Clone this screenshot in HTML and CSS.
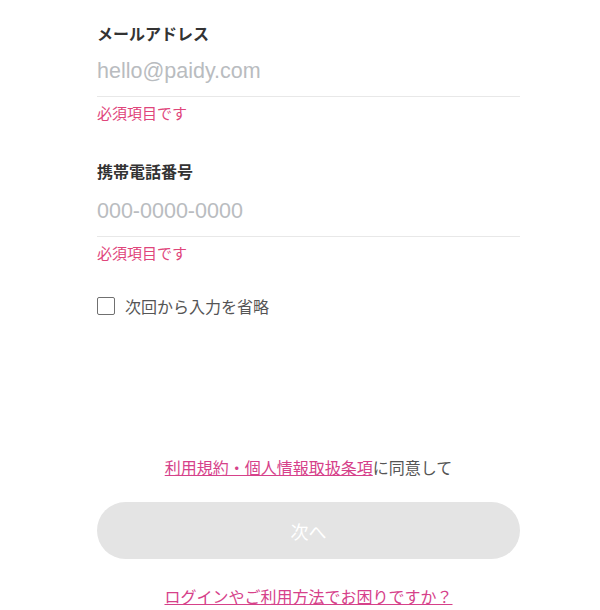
FILE: index.html
```html
<!DOCTYPE html>
<html lang="ja">
<head>
    <meta charset="UTF-8">
    <meta name="viewport" content="width=device-width, initial-scale=1.0">
    <title>Paidy</title>
    <link rel="stylesheet" href="styles.css">
</head>
<body>
    <div class="container">
        <div class="field">
            <label class="field-label" for="email">メールアドレス</label>
            <input class="field-input" id="email" type="email" placeholder="hello@paidy.com">
            <div class="field-error">必須項目です</div>
        </div>

        <div class="field">
            <label class="field-label" for="phone">携帯電話番号</label>
            <input class="field-input" id="phone" type="tel" placeholder="000-0000-0000">
            <div class="field-error">必須項目です</div>
        </div>

        <label class="remember">
            <span class="checkbox"></span>
            <span>次回から入力を省略</span>
        </label>

        <p class="terms"><a href="#">利用規約・個人情報取扱条項</a>に同意して</p>

        <button class="next-btn" disabled>次へ</button>

        <p class="help"><a href="#">ログインやご利用方法でお困りですか？</a></p>
    </div>
</body>
</html>
```

FILE: styles.css
```css
body {
    margin: 0;
    background: #fff;
    font-family: "Noto Sans CJK JP", "Liberation Sans", sans-serif;
}
.container {
    width: 423px;
    margin-left: 97px;
    padding-top: 23px;
}
.field {
    display: flex;
    flex-direction: column;
    margin-bottom: 38px;
}
.field + .field .field-input {
    height: 56px;
    padding-top: 13px;
}
.field-label {
    font-size: 16px;
    font-weight: bold;
    line-height: 20px;
    color: #333;
}
.field-input {
    border: none;
    border-bottom: 1px solid #e8e8e8;
    padding: 12px 0 8px;
    margin: 0;
    height: 54px;
    box-sizing: border-box;
    font-family: "Liberation Sans", "Noto Sans CJK JP", sans-serif;
    font-size: 21.5px;
    line-height: 34px;
    color: #333;
    outline: none;
}
.field-input::placeholder {
    color: #b9bcc0;
}
.field-error {
    margin-top: 6px;
    font-size: 15px;
    line-height: 20px;
    color: #e0457b;
}
.remember {
    display: flex;
    align-items: center;
    gap: 10px;
    margin-top: -5px;
    height: 20px;
    font-size: 16px;
    color: #555;
}
.checkbox {
    width: 16px;
    height: 16px;
    border: 1.5px solid #707070;
    border-radius: 2px;
}
.terms {
    margin: 141px 0 0;
    text-align: center;
    font-size: 16px;
    line-height: 20px;
    color: #555;
}
.terms a,
.help a {
    color: #d6418a;
    text-decoration: underline;
}
.next-btn {
    display: block;
    width: 100%;
    height: 57px;
    margin-top: 25px;
    border: none;
    border-radius: 29px;
    background: #e4e4e4;
    color: #fff;
    font-family: inherit;
    font-size: 18px;
}
.help {
    margin: 27px 0 0;
    text-align: center;
    font-size: 16px;
    line-height: 20px;
}
```
